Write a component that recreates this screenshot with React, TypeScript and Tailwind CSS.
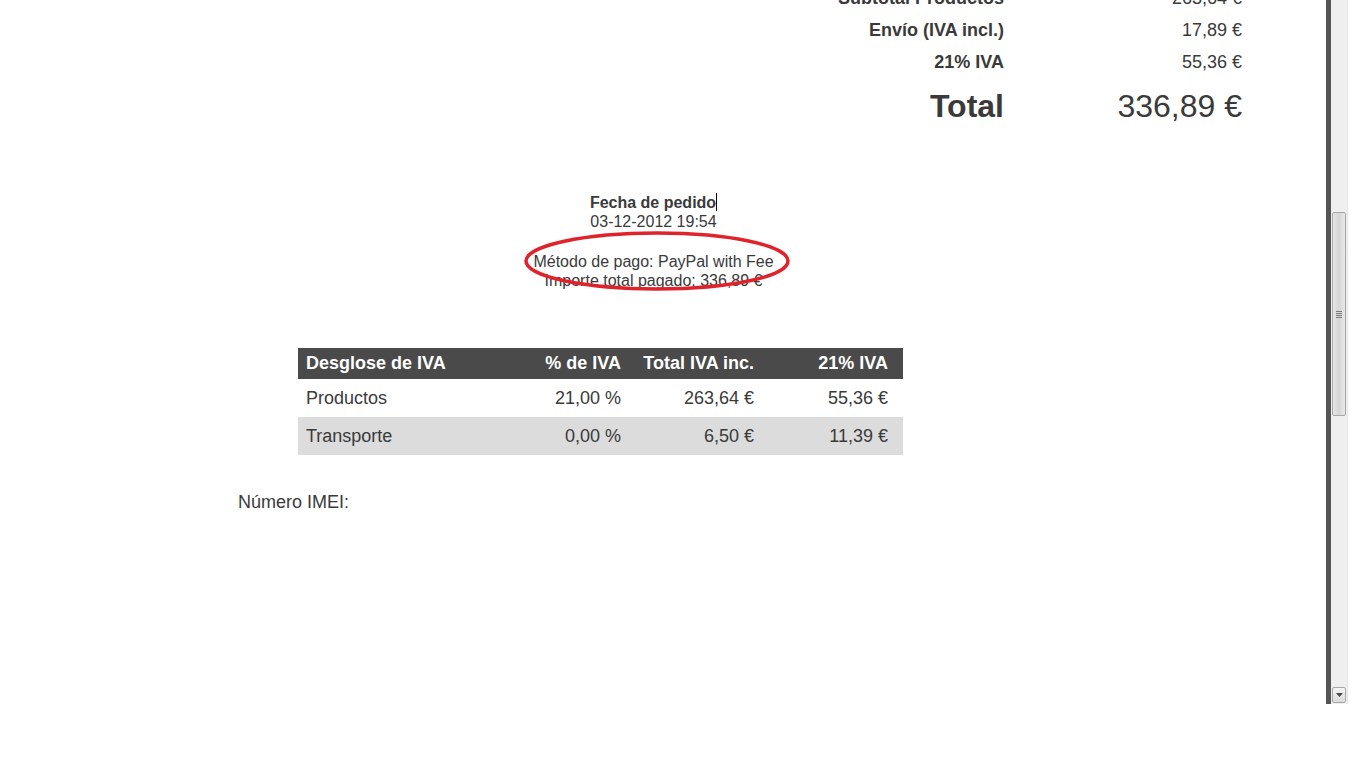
import React from 'react';

const totals = [
  { label: 'Subtotal Productos', value: '263,64 €' },
  { label: 'Envío (IVA incl.)', value: '17,89 €' },
  { label: '21% IVA', value: '55,36 €' },
];

const ivaRows = [
  { name: 'Productos', pct: '21,00 %', total: '263,64 €', iva: '55,36 €', bg: 'bg-white' },
  { name: 'Transporte', pct: '0,00 %', total: '6,50 €', iva: '11,39 €', bg: 'bg-[#dcdcdc]' },
];

const Scrollbar: React.FC = () => (
  <div className="flex h-full">
    <div className="w-[5px] h-full bg-[#555555]" />
    <div className="w-[17px] h-full bg-[#efefef] border-r border-[#e6e6e6] flex flex-col">
      <div className="h-[212px]" />
      <div className="mx-px h-[204px] rounded-[2px] border border-[#a8a8a8] bg-gradient-to-r from-[#e4e4e4] via-[#d6d6d6] to-[#e9e9e9] flex items-center justify-center">
        <div className="flex flex-col gap-px">
          <div className="w-[6px] h-px bg-[#7a7a7a]" />
          <div className="w-[6px] h-px bg-[#7a7a7a]" />
          <div className="w-[6px] h-px bg-[#7a7a7a]" />
          <div className="w-[6px] h-px bg-[#7a7a7a]" />
        </div>
      </div>
      <div className="flex-1" />
      <div className="mx-px mb-px h-[16px] rounded-[2px] border border-[#a8a8a8] bg-gradient-to-b from-[#f4f4f4] to-[#dcdcdc] flex items-center justify-center">
        <svg width="7" height="4" viewBox="0 0 7 4">
          <path d="M0 0h7L3.5 4z" fill="#4a4a4a" />
        </svg>
      </div>
    </div>
  </div>
);

const App: React.FC = () => {
  return (
    <div
      className="w-[1366px] h-[768px] bg-white text-[#3a3a3a] overflow-hidden"
      style={{ fontFamily: '"Liberation Sans", Arial, sans-serif' }}
    >
      <div className="flex h-[704px]">
        <div className="w-[1326px] h-full overflow-hidden">
          <div className="-mt-[18px]">
            {/* totals */}
            <div className="ml-[822px] w-[420px] grid grid-cols-[182px_238px] text-[18px]">
              {totals.map((t) => (
                <React.Fragment key={t.label}>
                  <div className="h-8 flex items-center justify-end font-bold">{t.label}</div>
                  <div className="h-8 flex items-center justify-end">{t.value}</div>
                </React.Fragment>
              ))}
              <div className="h-14 flex items-center justify-end font-bold text-[32px]">Total</div>
              <div className="h-14 flex items-center justify-end text-[32px]">336,89 €</div>
            </div>

            <div className="ml-[238px] w-[831px]">
              {/* order info */}
              <div className="relative mt-[59px] text-center text-[16px] leading-[19px]">
                <div className="font-bold">
                  Fecha de pedido
                  <span className="inline-block w-px h-[18px] bg-black align-[-3px]" />
                </div>
                <div>03-12-2012 19:54</div>
                <div className="mt-[21px]">Método de pago: PayPal with Fee</div>
                <div>Importe total pagado: 336,89 €</div>
                <svg
                  className="absolute left-[286px] top-[38px] pointer-events-none"
                  width="268"
                  height="62"
                  viewBox="0 0 268 62"
                >
                  <ellipse cx="133" cy="30" rx="131" ry="28" fill="none" stroke="#e0222b" strokeWidth="3.5" />
                </svg>
              </div>

              {/* IVA breakdown */}
              <div className="ml-[60px] mt-[58px] w-[605px] text-[18px]">
                <div className="h-[31px] bg-[#4a4a4a] text-white font-bold grid grid-cols-[217px_120px_133px_135px] items-center">
                  <div className="pl-2">Desglose de IVA</div>
                  <div className="text-right pr-[14px]">% de IVA</div>
                  <div className="text-right pr-[14px]">Total IVA inc.</div>
                  <div className="text-right pr-[15px]">21% IVA</div>
                </div>
                {ivaRows.map((r) => (
                  <div key={r.name} className={`h-[38px] ${r.bg} grid grid-cols-[217px_120px_133px_135px] items-center`}>
                    <div className="pl-2">{r.name}</div>
                    <div className="text-right pr-[14px]">{r.pct}</div>
                    <div className="text-right pr-[14px]">{r.total}</div>
                    <div className="text-right pr-[15px]">{r.iva}</div>
                  </div>
                ))}
              </div>

              <div className="mt-[37px] text-[18px] leading-5">Número IMEI:</div>
            </div>
          </div>
        </div>
        <Scrollbar />
      </div>
    </div>
  );
};

export default App;
